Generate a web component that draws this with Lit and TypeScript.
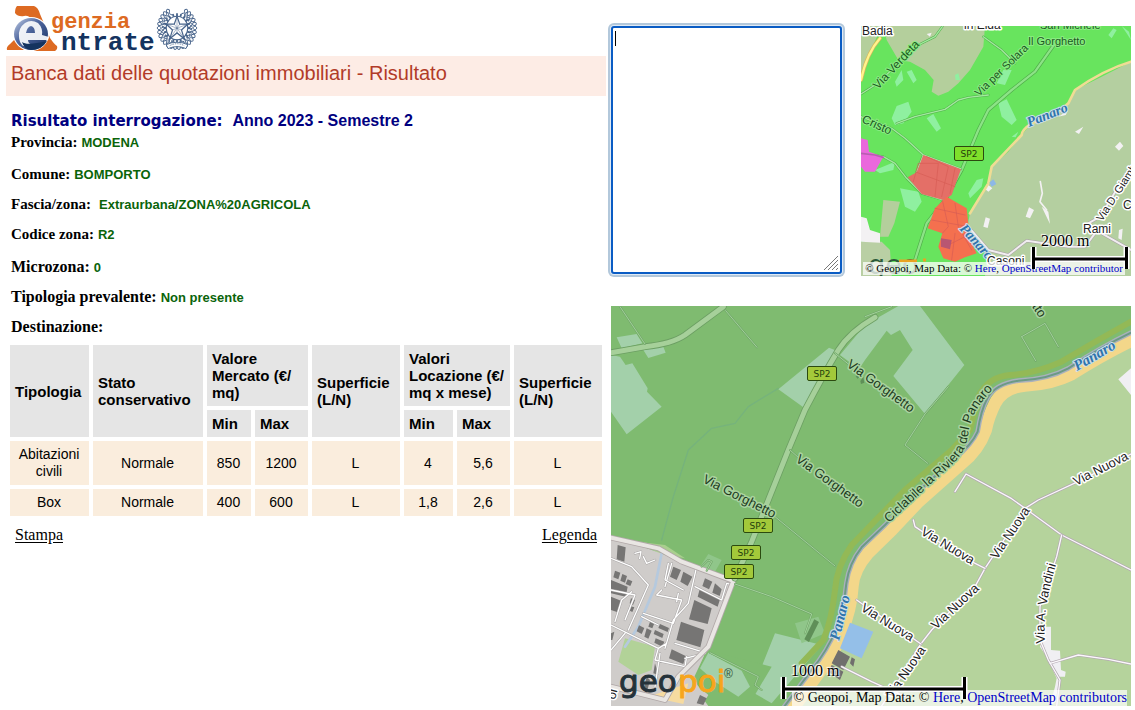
import { LitElement, html, svg, css } from "lit";
import { customElement } from "lit/decorators.js";

type Label = [text: string, x: number, y: number, angle: number, kind: string];

/* Street and place names of a map: baseline start, angle and style class. */
const drawLabels = (items: Label[]) =>
  items.map(
    ([text, x, y, angle, kind]) =>
      svg`<text class=${kind} transform="translate(${x} ${y}) rotate(${angle})">${text}</text>`
  );

const shield = (x: number, y: number) => svg`
  <g transform="translate(${x} ${y})">
    <rect class="shield" x=".5" y=".5" width="29" height="14" rx="1.5"></rect>
    <text class="shield-text" x="15" y="11" text-anchor="middle">SP2</text>
  </g>`;

const road = (d: string, kind: string) =>
  svg`<path class="case ${kind}" d=${d}></path><path class="road ${kind}" d=${d}></path>`;

const mapStyles = css`
  :host { display: block; position: relative; overflow: hidden; font-family: "Liberation Serif", serif; color: #000; }
  .map { display: block; width: 100%; height: auto; }
  text { font-family: "Liberation Sans", sans-serif; paint-order: stroke; stroke-linejoin: round; }
  .street, .dark, .town { font-size: 13px; fill: #222; stroke: #fff; stroke-width: 3px; }
  .dark { fill: #1d3a1d; stroke: #a9d3a0; }
  .town { font-size: 12px; }
  .bright { font-size: 12px; fill: #1b5a22; stroke: #8bec83; stroke-width: 2px; }
  .place { font-size: 11px; fill: #1b5a22; stroke: #8bec83; stroke-width: 2px; }
  .water { font-family: "Liberation Serif", serif; font-style: italic; font-weight: 700; font-size: 15px; fill: #2f74ab; stroke: #cfe0ea; stroke-width: 2px; }
  .shield { fill: #a3c93a; stroke: #2b4a10; }
  .shield-text { font-family: "DejaVu Sans", sans-serif; font-size: 9px; fill: #24400c; }
  .case, .road, .line { fill: none; stroke-linejoin: round; stroke-linecap: round; }
  .scale { position: absolute; display: grid; font-size: 16px; line-height: 12px; text-shadow: 0 0 2px #fff, 1px 1px 1px #fff, -1px -1px 1px #fff; }
  .scale span { padding-left: 9px; }
  .bar { display: block; overflow: visible; fill: none; }
  .halo { stroke: #fff; stroke-width: 6; }
  .ink { stroke: #000; stroke-width: 3; }
  .credit { position: absolute; bottom: 0; right: 4px; white-space: nowrap; background: rgba(255, 255, 255, 0.7); }
  a { color: #0000c8; text-decoration: none; }
`;

@customElement("zone-map")
class ZoneMap extends LitElement {
  static styles = [
    mapStyles,
    css`
      .credit { font-size: 11px; line-height: 13px; padding: 0 2px; right: 6px; bottom: 1px; background: rgba(255, 255, 255, 0.75); }
      .scale { right: 3px; bottom: 7px; }
      .water { font-size: 14px; }
      .case { stroke: #4fae4a; stroke-width: 11; }
      .road { stroke: #8ce386; stroke-width: 7; }
      .case.minor { stroke-width: 7; }
      .road.minor { stroke: #a4eaa0; stroke-width: 4; }
      .case.out { stroke: #a99fa6; stroke-width: 9; }
      .road.out { stroke: #f1eef0; stroke-width: 6; }
      .shield { fill: #7fdf2b; }
      .small { font-size: 11px; fill: #222; stroke: #fff; stroke-width: 3px; }
      .brand { font-family: "DejaVu Sans", sans-serif; font-size: 27px; fill: #2b5a3a; }
    `,
  ];

  render() {
    return html`
      <svg class="map" viewBox="0 0 270 250" role="img" aria-label="Mappa della zona">
        <g transform="scale(.33333) translate(-18 -18)">
          <path fill="#68e45e" d="M18 18H828V768H18z"></path>
          <path fill="#b4cfa0" d="M828 125L740 170 660 210 640 250 600 285 530 310 500 345 460 395 410 440 400 490 345 580 338 615 350 650 400 690 390 768H828z"></path>
          <path fill="#b4cf9c" d="M85 18H390L385 80 345 150 310 190 280 215 250 227 230 215 236 180 210 150 165 125 130 120 95 60zM18 18H80L18 160zM85 540L135 545 118 610 100 650 75 650z"></path>
          <path fill="#b9cfa4" d="M18 665L80 665 105 690 110 768H18z"></path>
          <path fill="#f3f1f3" d="M18 590L35 595 45 630 75 640 75 668 18 665zM780 380L795 365 805 378 792 392zM660 335L685 320 672 342zM512 590L522 562 537 570 525 595zM385 620L392 592 405 596 398 624zM560 560L580 575 585 612zM790 655L792 630 803 626 800 660zM610 290L640 270 632 285zM388 505L400 495 412 505 400 515zM215 42L230 38 225 50z"></path>
          <path class="line" stroke="#f3f1f3" stroke-width="5" d="M556 485L562 520 555 545 575 570"></path>
          <path fill="#8ff0a0" d="M110 295L125 258 160 245 170 275 145 310 120 315zM430 250L455 238 485 300 470 315 440 290zM425 190L445 150 470 150 450 195zM215 295L235 282 258 325 245 335zM135 505L190 515 200 545 180 575 150 560zM60 450L120 425 115 450 75 460zM155 155L170 150 185 180 175 190zM340 520L365 480 385 475 380 500 345 535zM120 185L140 150 145 180 125 200zM760 45L775 25 785 30 770 55zM800 18L822 35 828 60 815 40zM470 350L490 335 482 352zM300 165L310 160 315 180 302 180z"></path>
          <path class="line" stroke="#d9b65c" stroke-width="11" d="M18 180Q35 100 75 55"></path>
          <path class="line" stroke="#fff38d" stroke-width="7" d="M18 180Q35 100 75 55"></path>
          <path class="line" stroke="#efdc94" stroke-width="8" d="M828 125Q745 150 660 210L640 250 600 285 530 310Q500 330 500 345L410 440 400 490 345 580"></path>
          ${road("M600 70L540 155 470 210 400 270 370 330 320 450 270 540 215 610 180 720", "")}
          ${road("M385 50L440 90 480 130M400 225L340 232 310 240 270 268 180 290 125 310", "minor")}
          ${road("M18 290L110 325 150 355 205 405M18 400L85 410 120 430 155 475 200 520 265 540M205 405L185 455M205 405L318 447M18 222L60 195", "minor")}
          ${road("M60 195L110 150 190 75 240 50 262 20", "minor")}
          ${road("M828 440L790 500 735 590 700 610 740 640 828 690M400 690L460 705 515 662 640 680 690 680 720 640M340 620L400 690", "out")}
          <path fill="#e46f67" d="M205 405L318 448 290 525 265 540 200 522 158 472 185 457z"></path>
          <path fill="#f4704f" d="M275 530L335 565 340 610 345 660 365 700 330 712 300 725 265 715 250 680 262 640 218 625 240 565z"></path>
          <path class="line" stroke="#d65c55" stroke-width="2" d="M185 457L300 500M175 485L190 430 250 430 240 530M215 410L280 440 260 530M300 445L285 520M240 565L330 585M230 600L340 620M262 540L280 620 262 640M300 550L310 620 350 690M270 680L330 650M290 720L300 640"></path>
          <path fill="#b85672" d="M258 655L290 660 285 688 258 680z"></path>
          <path fill="#ea68dc" d="M18 355L38 360 42 395 85 410 60 455 30 455 18 440z"></path>
          <path class="line" stroke="#b95db2" stroke-width="5" d="M18 400L60 405 85 412"></path>
          <path fill="#8db8e6" d="M403 488L415 478 424 492 410 500z"></path>
        </g>
        <text class="brand" x="7" y="248">geo</text>
        <path stroke="#e9a321" stroke-width="3" d="M38 235H56M62 234H65"></path>
        ${drawLabels([
          ["Badia", 1, 9, 0, "town"],
          ["in Elda", 103, 3, 0, "town"],
          ["San Michele", 179, 3, 0, "place"],
          ["Via Verdeta", 17, 64, -47, "bright"],
          ["Via per Solara", 118, 71, -44, "place"],
          ["Il Gorghetto", 167, 19, 0, "place"],
          ["Cristo", 0, 96, 24, "bright"],
          ["Panaro", 168, 101, -22, "water"],
          ["Panaro", 98, 203, 48, "water"],
          ["Rami", 222, 207, 0, "town"],
          ["Casoni", 126, 239, 0, "town"],
          ["Via D. Giamb", 241, 196, -57, "small"],
          ["C", 262, 183, 0, "town"],
        ])}
        ${shield(93, 120)}
      </svg>
      <div class="credit">© Geopoi, Map Data: © <a href="#here">Here</a>, <a href="#osm">OpenStreetMap contributor</a></div>
      <div class="scale">
        <span>2000 m</span>
        <svg class="bar" width="96" height="22" aria-hidden="true">
          <path class="halo" d="M1.500 0V22M94.500 0V22M0 12H96"></path>
          <path class="ink" d="M1.500 0V22M94.500 0V22M0 12H96"></path>
        </svg>
      </div>
    `;
  }
}

@customElement("detail-map")
class DetailMap extends LitElement {
  static styles = [
    mapStyles,
    css`
      .credit { font-size: 14px; line-height: 16px; padding: 0 0 0 2px; }
      .scale { right: 165px; bottom: 7px; }
      .case { stroke: #b3a7b2; stroke-width: 8; }
      .road { stroke: #fbf9fb; stroke-width: 4; }
      .case.green { stroke: #6c9f63; stroke-width: 20; }
      .road.green { stroke: #a6d09a; stroke-width: 15; }
      .case.path { stroke: #6fa568; stroke-width: 6; }
      .road.path { stroke: #a4d29b; stroke-width: 3; }
      .case.city { stroke: #a7a4a4; stroke-width: 7; }
      .road.city { stroke: #fff; stroke-width: 4; }
      .brand { font-family: "DejaVu Sans", sans-serif; font-size: 31px; fill: #25323a; stroke: #25323a; stroke-width: 1px; }
      .brand.warm { fill: #f7a51c; stroke: #f7a51c; }
      .mark { font-size: 12px; fill: #33503a; }
    `,
  ];

  render() {
    const bank =
      "M1578 122Q1490 165 1400 222Q1340 252 1260 256Q1195 262 1170 310Q1150 350 1142 390Q1120 450 1070 490L940 605 860 690 790 758Q745 810 742 860Q738 930 708 1000Q690 1060 640 1120L560 1230";
    const river =
      "M1578 98Q1490 140 1390 205Q1330 238 1240 242Q1170 252 1147 295Q1128 330 1118 395Q1100 435 1050 475L920 592 840 675 770 742Q732 790 724 850Q718 920 692 990Q668 1050 620 1110L530 1230";
    return html`
      <svg class="map" viewBox="0 0 520 400" role="img" aria-label="Mappa di dettaglio">
        <g transform="scale(.33333) translate(-18 -18)">
          <path fill="#7fbb70" d="M18 18H1578V1218H18z"></path>
          <path fill="#b5d39c" d="M1578 122Q1490 165 1400 222Q1340 252 1260 256Q1195 262 1170 310Q1150 350 1142 390Q1120 450 1070 490L940 605 860 690 790 758Q745 810 742 860Q738 930 708 1000Q690 1060 640 1120L560 1218H1578z"></path>
          <path fill="#a3d0aa" d="M35 112L95 102 112 130 50 145zM115 150L175 140 182 158 130 174zM18 165L45 170 62 195 82 190 128 265 126 275 170 320 65 403 18 335zM520 268L672 143 695 152 595 322zM705 165L762 207 780 180 845 92 858 105 885 90 923 150 865 228 960 342 1078 195 945 18 880 18 780 75zM510 1000L650 1035 500 1210 440 1175z"></path>
          <path fill="#90c68a" d="M570 970L640 950 660 1000 590 1030zM285 800L310 762 350 780 330 815z"></path>
          <path fill="#5f8f58" d="M598 1018L628 958 642 966 612 1026zM752 228L760 224 764 232 757 236zM766 243L775 230 778 248 768 252z"></path>
          <path class="line" stroke="#76b37c" stroke-width="4" d="M205 590L250 450 320 385 390 370 430 320 520 265M205 590L170 720"></path>
          <path class="line" stroke="#93b956" stroke-width="18" d="M1578 65Q1470 125 1370 185Q1290 220 1215 225Q1150 230 1120 290L1095 390 1040 450 900 570 740 735Q695 800 690 870Q680 960 655 1020L590 1090"></path>
          <path class="line" stroke="#f3d78a" stroke-width="38" d=${bank}></path>
          <path class="line" stroke="#a9b0bd" stroke-width="14" d=${river}></path>
          <path class="line" stroke="#6c9a86" stroke-width="6" d=${river}></path>
          <path fill="#94bfe8" d="M735 968L805 995 770 1075 705 1045z"></path>
          <path fill="#f0eff3" d="M1320 980L1338 980 1338 1050 1365 1052 1368 1110 1382 1115 1380 1130 1365 1130 1360 1200 1335 1218 1350 1160 1355 1135 1325 1070 1305 1040zM1540 238L1578 205V285z"></path>
          <path fill="#706f6d" d="M680 1090L700 1050 735 1070 715 1110zM735 1090L740 1072 750 1078 745 1100zM670 1115L680 1095 715 1115 705 1140z"></path>
          <path fill="#a9cf8e" d="M100 725L180 735 240 775 160 760z"></path>
          <path fill="#cfccca" d="M18 705L385 840 310 1040 268 1130 290 1190 310 1218H18z"></path>
          <path fill="#b2d298" d="M60 1015L150 1040 140 1110 100 1125 40 1085z"></path>
          <path fill="#7fbb70" d="M305 1050L270 1140 310 1190 320 1218H430L500 1100z"></path>
          <path fill="#a3d0aa" d="M310 1058L410 1112 435 1160 400 1190 330 1145 285 1105z"></path>
          <path fill="#cfccca" d="M270 1150L310 1185 290 1218H250z"></path>
          <path fill="#f6dba0" d="M130 1190L250 1150 235 1212 180 1200z"></path>
          <path class="line" stroke="#b5c9de" stroke-width="8" d="M170 760L150 860 100 980 60 1040"></path>
          <path fill="#767574" d="M38 735L62 742 58 785 35 778zM205 800L228 810 215 840 195 830zM235 815L262 830 248 858 226 845zM300 835L322 845 312 868 292 858zM330 850L350 868 344 888 322 878zM284 868L345 898 338 920 278 890zM268 900L320 925 308 972 252 958zM228 965L298 990 286 1042 214 1020zM200 1048L242 1068 235 1092 192 1075zM18 840L68 860 62 890 18 880zM18 890L48 902 36 936 18 930zM30 812L46 818 40 838 25 832zM52 822L66 828 60 848 46 842zM68 838L82 844 76 858 62 852zM78 895L90 900 84 915 74 910zM74 918L88 922 82 936 70 930zM102 976L118 984 110 1002 95 994zM135 965L148 970 142 985 130 980zM165 972L192 984 188 996 160 984zM125 985L140 992 130 1016 118 1010zM150 990L176 1002 172 1014 146 1002zM152 1015L178 1025 172 1040 148 1028zM150 1090L145 1120 160 1125zM125 1130L135 1140 125 1180 115 1170zM18 1000L28 995 22 1020 18 1020zM285 1185L305 1195 295 1215 275 1210z"></path>
          ${road("M18 775L80 800 130 855 70 990M18 870L90 885 60 960M90 760L108 755 104 775M115 770L125 790 150 780M190 790L180 840 235 870M170 870L155 885 230 900 205 970 115 940M160 975L110 950M275 800L250 910 205 960 180 1045M180 860L200 790M270 860L350 900 365 850 385 855 300 1060 240 1075M220 880L215 905M210 1030L290 1055M18 975L160 1045 185 1030M30 965L50 900 80 875M18 1050L60 1000M160 1045L150 1080 240 1100 245 1070M165 1060L150 1160", "city")}
          <path class="line" stroke="#b0a7a7" stroke-width="17" d="M18 713L160 745 230 785 385 843M385 843L310 1040 220 1130 180 1200 100 1180 18 1160"></path>
          <path class="line" stroke="#e9e6e3" stroke-width="12" d="M18 713L160 745 230 785 385 843M385 843L310 1040 220 1130 180 1200 100 1180 18 1160"></path>
          ${road("M810 52Q735 95 700 150Q655 225 600 330L550 450 490 600 440 725 390 835", "green")}
          ${road("M18 158L120 140Q200 132 240 105L355 20", "green")}
          ${road("M45 20L120 132M362 32L456 142M510 650L690 798M390 852L500 890 620 942 600 1000M1030 260L960 342 900 435 968 490M690 160L740 200M1250 110L1320 70 1360 140M1250 110L1292 182M555 450L600 490M315 1058L460 1130 450 1155 470 1170M290 800L310 780 320 785 305 812M780 50L860 20", "path")}
          ${road("M1578 462L1440 535 1300 600 1260 625 1140 805 1110 860 980 990 945 1035 870 1160 830 1218", "")}
          ${road("M1050 575L1083 522 1220 596 1260 625 1370 705 1578 810", "")}
          ${road("M925 660L930 680 960 700 1100 785 1140 805", "")}
          ${road("M1370 705L1355 770 1305 920 1305 1020 1330 1080 1365 1140 1355 1218M1335 1090L1420 1065 1510 1078 1578 1092", "")}
          ${road("M755 900L790 925 860 970 948 1032M710 1100L800 1145 900 1190", "")}
        </g>
        ${drawLabels([
          ["Via Gorghetto", 235, 60, 36, "dark"],
          ["Via Gorghetto", 184, 155, 36, "dark"],
          ["Via Gorghetto", 91, 176, 27, "dark"],
          ["etto", 417, -6, 58, "dark"],
          ["Panaro", 466, 65, -30, "water"],
          ["Panaro", 228, 335, -76, "water"],
          ["Via Nuova", 465, 180, -27, "street"],
          ["Via Nuova", 309, 228, 31, "street"],
          ["Via Nuova", 386, 254, -56, "street"],
          ["Via Nuova", 325, 324, -43, "street"],
          ["Via Nuova", 249, 304, 32, "street"],
          ["Via Nuova", 281, 393, -55, "street"],
          ["oi", 4, 394, -75, "street"],
        ])}
        <defs>
          <path id="cycleway" d="M278 217L322 176C342 158 354 150 357 130C360 106 370 96 390 74"></path>
          <path id="vandini" d="M434 337Q431 300 448 250"></path>
        </defs>
        <text class="dark"><textPath href="#cycleway">Ciclabile la Riviera del Panaro</textPath></text>
        <text class="street"><textPath href="#vandini">Via A. Vandini</textPath></text>
        ${shield(196, 60)} ${shield(132, 212)} ${shield(120, 239)} ${shield(113, 258)}
        <text class="brand" x="8" y="386">geo</text>
        <text class="brand warm" x="67" y="386">poi</text>
        <text class="mark" x="113" y="372">®</text>
      </svg>
      <div class="credit">© Geopoi, Map Data: © <a href="#here">Here</a>, <a href="#osm">OpenStreetMap contributors</a></div>
      <div class="scale">
        <span>1000 m</span>
        <svg class="bar" width="184" height="22" aria-hidden="true">
          <path class="halo" d="M1.500 0V22M182.500 0V22M0 12H184"></path>
          <path class="ink" d="M1.500 0V22M182.500 0V22M0 12H184"></path>
        </svg>
      </div>
    `;
  }
}

@customElement("agency-logo")
class AgencyLogo extends LitElement {
  static styles = css`
    :host { display: block; }
    svg { display: block; }
    text { font-family: "Liberation Mono", monospace; font-weight: 700; }
    .first { font-size: 22px; fill: #dd6a22; }
    .second { font-size: 26px; fill: #14335f; }
  `;
  render() {
    const leaves = Array.from({ length: 26 }, (_, i) => 30 + i * 12);
    const teeth = Array.from({ length: 20 }, (_, i) => i * 18);
    return html`
      <svg width="200" height="56" viewBox="0 0 200 56" role="img" aria-label="Agenzia Entrate">
        <defs>
          <linearGradient id="disc" x1="0" y1="0" x2="1" y2="1">
            <stop offset="0" stop-color="#c3cfe6"></stop>
            <stop offset=".4" stop-color="#5068a0"></stop>
            <stop offset="1" stop-color="#152f60"></stop>
          </linearGradient>
        </defs>
        <path fill="#dd6a22" d="M17 6H34Q38 7 40 14L50 38Q54 44 57 46Q58 49 55 51H34L32 20Q29 15 24 16Q18 17 15 13Q15 8 17 6z"></path>
        <path fill="#dd6a22" d="M7 50Q6 47 10 44L15 39 24 50z"></path>
        <ellipse cx="31" cy="34" rx="18" ry="17" fill="#fff"></ellipse>
        <ellipse cx="31" cy="34" rx="17" ry="16" fill="url(#disc)"></ellipse>
        <path fill="#fff" d="M19 37Q18 28 25 23Q31 19 38 23Q43 28 42 35L49 37 48 40H28Q28 44 33 45L23 46Q19 42 19 37zM26 33H35Q35 27 31 26Q27 27 26 33z" opacity=".9"></path>
        <path fill="#14335f" d="M22 42Q27 46 47 41Q42 50 31 50Q24 49 22 42z"></path>
        <text class="first" x="51" y="28">genzia</text>
        <text class="second" x="61" y="50">ntrate</text>
        <g transform="translate(177 28) scale(.9 .98)" fill="none" stroke="#48648b">
          ${leaves.map(
            (a) => svg`<g transform="rotate(${a})"><path d="M-2 -20Q0 -24 2 -20Q0 -15 -2 -20M0 -17L2 -14M-1 -17L-3 -15"></path></g>`
          )}
          <circle r="12" fill="#fff" stroke-width="1.200"></circle>
          ${teeth.map((a) => svg`<path transform="rotate(${a})" stroke-width="2" d="M0 -12V-15"></path>`)}
          <path fill="#fff" stroke-width="1.300" d="M0 -12L3 -4 12 -4 5 2 8 11 0 5 -8 11 -5 2 -12 -4 -3 -4z"></path>
          <path d="M0 -12V5M12 -4L-5 2M-12 -4L5 2M-8 11L3 -4M8 11L-3 -4" stroke-width=".5"></path>
          <path fill="#fff" d="M-12 17Q0 12 12 17L10 21Q0 17 -10 21z"></path>
          <path d="M-8 18Q0 14 8 18" stroke-dasharray="1 1"></path>
        </g>
      </svg>
    `;
  }
}

@customElement("app-root")
class AppRoot extends LitElement {
  static styles = css`
    :host { display: block; background: #fff; color: #000; font-family: "Liberation Serif", serif; }
    .page { display: grid; grid-template-columns: minmax(0, 15fr) minmax(0, 13fr); column-gap: 5px; padding: 0 4px 4px 6px; }
    agency-logo { margin-left: -6px; }
    h1 { margin: 0; padding: 5px 5px 11px; background: #fdece5; color: #b23b28; font: 400 20px/24px "Liberation Sans", sans-serif; }
    .info { padding: 15px 5px 0; }
    h2 { margin: 0; color: #000080; font: 700 16px/20px "Liberation Sans", sans-serif; }
    .lead { font-family: "DejaVu Sans", sans-serif; font-size: 15px; margin-right: 6px; }
    dl { margin: 1px 0 0; }
    .row { display: flex; gap: 4px; height: 30px; align-items: baseline; font-size: 15px; line-height: 20px; }
    .wide { height: 32px; }
    .apart { gap: 8px; }
    .large { font-size: 16px; line-height: 22px; }
    dt { font-weight: 700; }
    dd { margin: 0; color: #0a640a; font: 700 13px/20px "Liberation Sans", sans-serif; }
    table { width: 100%; table-layout: fixed; border-collapse: separate; border-spacing: 4px; font: 14px/17px "Liberation Sans", sans-serif; margin-top: -5px; }
    th { background: #e5e5e5; text-align: left; padding: 5px; font-weight: 700; font-size: 15px; }
    td { background: #faeddd; text-align: center; padding: 5px 6px 5px 5px; }
    .c1 { width: 79px; } .c2 { width: 110px; } .c3 { width: 44px; } .c4 { width: 53px; }
    .c5 { width: 88px; } .c6 { width: 49px; } .c7 { width: 53px; } .c8 { width: 88px; }
    .links { display: flex; justify-content: space-between; padding: 6px 9px; font-size: 16px; line-height: 18px; }
    .links a { color: #000; text-underline-offset: 2px; }
    .side { padding-top: 26px; display: grid; gap: 30px; align-content: start; }
    .top { display: grid; grid-template-columns: minmax(0, 231fr) minmax(0, 270fr); gap: 19px; }
    .field { position: relative; height: 248px; }
    textarea { display: block; box-sizing: border-box; width: 100%; height: 100%; resize: none; border: 2px solid #0a5cc4; border-radius: 3px; padding: 2px; outline: none; box-shadow: 0 0 0 1px #dfeaf5, 0 0 0 3px #b3c8db; font: 14px/17px "Liberation Mono", monospace; caret-color: transparent; }
    .caret { position: absolute; left: 4px; top: 5px; width: 1px; height: 15px; background: #000; }
    .grip { position: absolute; right: 4px; bottom: 4px; stroke: #777; fill: none; }
  `;

  render() {
    const facts = [
      ["Provincia:", "MODENA", "wide"],
      ["Comune:", "BOMPORTO", ""],
      ["Fascia/zona:", "Extraurbana/ZONA%20AGRICOLA", "apart"],
      ["Codice zona:", "R2", "wide"],
      ["Microzona:", "0", "large"],
      ["Tipologia prevalente:", "Non presente", "large"],
      ["Destinazione:", "", "large"],
    ];
    const rows = [
      ["Abitazioni civili", "Normale", "850", "1200", "L", "4", "5,6", "L"],
      ["Box", "Normale", "400", "600", "L", "1,8", "2,6", "L"],
    ];
    return html`
      <div class="page">
        <main>
          <agency-logo></agency-logo>
          <h1>Banca dati delle quotazioni immobiliari - Risultato</h1>
          <section class="info">
            <h2><span class="lead">Risultato interrogazione:</span> Anno 2023 - Semestre 2</h2>
            <dl>
              ${facts.map(([name, value, kind]) => html`<div class="row ${kind}"><dt>${name}</dt><dd>${value}</dd></div>`)}
            </dl>
          </section>
          <table>
            <colgroup>
              ${[1, 2, 3, 4, 5, 6, 7, 8].map((n) => html`<col class="c${n}" />`)}
            </colgroup>
            <thead>
              <tr>
                <th rowspan="2">Tipologia</th>
                <th rowspan="2">Stato conservativo</th>
                <th colspan="2">Valore Mercato (€/<wbr />mq)</th>
                <th rowspan="2">Superficie (L/N)</th>
                <th colspan="2">Valori Locazione (€/<wbr />mq x mese)</th>
                <th rowspan="2">Superficie (L/N)</th>
              </tr>
              <tr><th>Min</th><th>Max</th><th>Min</th><th>Max</th></tr>
            </thead>
            <tbody>
              ${rows.map((r) => html`<tr>${r.map((c) => html`<td>${c}</td>`)}</tr>`)}
            </tbody>
          </table>
          <nav class="links"><a href="#stampa">Stampa</a><a href="#legenda">Legenda</a></nav>
        </main>
        <aside class="side">
          <div class="top">
            <div class="field">
              <textarea aria-label="Note"></textarea>
              <span class="caret"></span>
              <svg class="grip" width="14" height="14" aria-hidden="true"><path d="M0 14L14 0M4 14L14 4M8 14L14 8M12 14L14 12"></path></svg>
            </div>
            <zone-map></zone-map>
          </div>
          <detail-map></detail-map>
        </aside>
      </div>
    `;
  }
}
